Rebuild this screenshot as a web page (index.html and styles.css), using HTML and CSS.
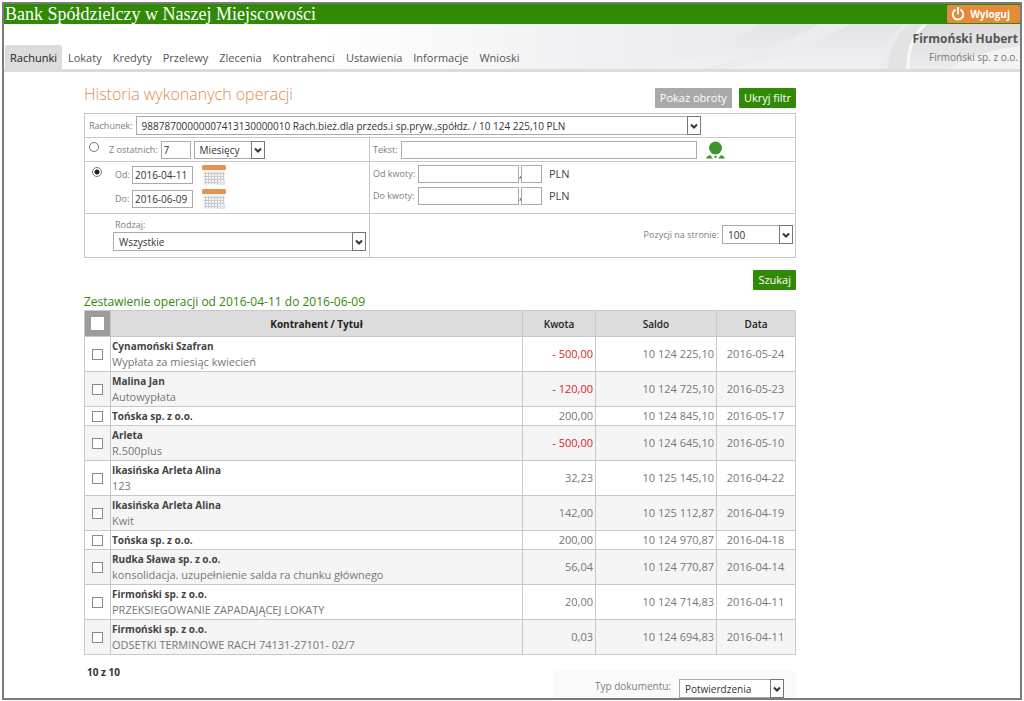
FILE: index.html
```html
<!DOCTYPE html>
<html lang="pl">
<head>
<meta charset="utf-8">
<meta name="viewport" content="width=device-width, initial-scale=1">
<title>Historia wykonanych operacji</title>
<link rel="stylesheet" href="styles.css">
</head>
<body>
<div class="frame">
  <header class="topbar">
    <span class="bank-name">Bank Spółdzielczy w Naszej Miejscowości</span>
    <button class="logout" type="button">
      <svg class="power" viewBox="0 0 16 16" aria-hidden="true"><path d="M4.6 3.4a6 6 0 1 0 6.8 0M8 1v6.5" fill="none" stroke="currentColor" stroke-width="2.2" stroke-linecap="round"/></svg>
      Wyloguj
    </button>
  </header>
  <div class="navbar">
    <svg class="swoosh" viewBox="0 0 700 46" preserveAspectRatio="none" aria-hidden="true">
      <defs>
        <linearGradient id="base" x1="0" x2="1" y1="0" y2="0"><stop offset="0" stop-color="#fff"/><stop offset=".35" stop-color="#f2f2f4"/><stop offset=".6" stop-color="#ebebed"/><stop offset="1" stop-color="#ececee"/></linearGradient>
        <linearGradient id="arc" x1="0" x2="0" y1="0" y2="1"><stop offset="0" stop-color="#dcdcde"/><stop offset="1" stop-color="#ececee"/></linearGradient>
        <linearGradient id="fade" x1="0" x2="0" y1="0" y2="1"><stop offset="0" stop-color="#e4e4e7"/><stop offset="1" stop-color="#f1f1f3"/></linearGradient>
      </defs>
      <rect width="700" height="46" fill="url(#base)"/>
      <path d="M330 46Q400 30 440 0H585Q565 16 560 46Z" fill="url(#fade)"/>
      <path d="M380 46Q450 30 500 0H530Q470 34 410 46Z" fill="#ececef"/>
      <path d="M568 46Q570 14 590 0H603Q588 16 587 46Z" fill="#e3e3e5"/>
      <path d="M588 46Q588 14 606 0H700V46Z" fill="url(#arc)"/>
      <path d="M588 46Q588 14 606 0" fill="none" stroke="#f8f8f8" stroke-width="3"/>
      <path d="M630 46Q650 30 700 22V46Z" fill="#f3f3f4"/>
    </svg>
    <nav class="tabs">
      <a class="tab active" href="#">Rachunki</a>
      <a class="tab" href="#">Lokaty</a>
      <a class="tab" href="#">Kredyty</a>
      <a class="tab" href="#">Przelewy</a>
      <a class="tab" href="#">Zlecenia</a>
      <a class="tab" href="#">Kontrahenci</a>
      <a class="tab" href="#">Ustawienia</a>
      <a class="tab" href="#">Informacje</a>
      <a class="tab" href="#">Wnioski</a>
    </nav>
    <div class="user">
      <strong class="user-name">Firmoński Hubert</strong>
      <span class="user-firm">Firmoński sp. z o.o.</span>
    </div>
  </div>

  <main class="content">
    <div class="title-row">
      <h1 class="title">Historia wykonanych operacji</h1>
      <button class="btn btn-gray" type="button">Pokaż obroty</button>
      <button class="btn" type="button">Ukryj filtr</button>
    </div>

    <form class="filter">
      <div class="cell wide account">
        <label for="account">Rachunek:</label>
        <span class="select account-select"><select id="account"><option>98878700000007413130000010 Rach.bież.dla przeds.i sp.pryw.,spółdz. / 10 124 225,10 PLN</option></select><span class="arrow"><svg viewBox="0 0 8 6"><path d="M1 1.5L4 4.5L7 1.5" /></svg></span></span>
      </div>

      <div class="cell last">
        <input class="radio" type="radio" name="range" id="range-last" aria-label="Z ostatnich">
        <label class="last-label" for="last-count">Z ostatnich:</label>
        <input class="field count" id="last-count" type="text" value="7">
        <span class="select unit"><select aria-label="Jednostka"><option>Miesięcy</option></select><span class="arrow"><svg viewBox="0 0 8 6"><path d="M1 1.5L4 4.5L7 1.5" /></svg></span></span>
      </div>
      <div class="cell right text-cell">
        <label for="text">Tekst:</label>
        <input class="field text" id="text" type="text">
        <svg class="people" viewBox="0 0 19 18" aria-hidden="true"><circle cx="9.500" cy="7" r="6.500"/><path d="M0 17.500Q1 14.500 4 14L7 17.500ZM12 17.500L15 14Q18 14.500 19 17.500ZM8 15.500L9.500 14.500L11 15.500L9.500 17.500Z"/></svg>
      </div>

      <div class="cell dates">
        <input class="radio" type="radio" name="range" id="range-dates" aria-label="Zakres dat" checked>
        <div class="date-rows">
          <div class="date-row">
            <label for="from">Od:</label>
            <input class="field date" id="from" type="text" value="2016-04-11">
            <svg class="calendar" viewBox="0 0 24 20" aria-hidden="true"><path d="M1 5H23V18L19 20H1Z" fill="#f3f3f5"/><path d="M2 8.500H22M2 11.500H22M2 14.500H22M2 17.500H18M3.500 7V19M6.500 7V19M9.500 7V19M12.500 7V19M15.500 7V19M18.500 7V16M21.500 7V14" stroke="#c9c9d0" fill="none"/><path d="M15 20L23 15V20Z" fill="#e2e2e6"/><rect y="0" width="24" height="5" rx="1.500" fill="#e9914f"/></svg>
          </div>
          <div class="date-row">
            <label for="to">Do:</label>
            <input class="field date" id="to" type="text" value="2016-06-09">
            <svg class="calendar" viewBox="0 0 24 20" aria-hidden="true"><path d="M1 5H23V18L19 20H1Z" fill="#f3f3f5"/><path d="M2 8.500H22M2 11.500H22M2 14.500H22M2 17.500H18M3.500 7V19M6.500 7V19M9.500 7V19M12.500 7V19M15.500 7V19M18.500 7V16M21.500 7V14" stroke="#c9c9d0" fill="none"/><path d="M15 20L23 15V20Z" fill="#e2e2e6"/><rect y="0" width="24" height="5" rx="1.500" fill="#e9914f"/></svg>
          </div>
        </div>
      </div>
      <div class="cell right amounts">
        <div class="amount-row">
          <label for="min">Od kwoty:</label>
          <input class="field amount" id="min" type="text"><span class="comma">,</span><input class="field cents" type="text" aria-label="Od kwoty, grosze">
          <span class="currency">PLN</span>
        </div>
        <div class="amount-row">
          <label for="max">Do kwoty:</label>
          <input class="field amount" id="max" type="text"><span class="comma">,</span><input class="field cents" type="text" aria-label="Do kwoty, grosze">
          <span class="currency">PLN</span>
        </div>
      </div>

      <div class="cell kind">
        <label for="kind">Rodzaj:</label>
        <span class="select"><select id="kind"><option>Wszystkie</option></select><span class="arrow"><svg viewBox="0 0 8 6"><path d="M1 1.5L4 4.5L7 1.5" /></svg></span></span>
      </div>
      <div class="cell right paging">
        <label for="per-page">Pozycji na stronie:</label>
        <span class="select per-page"><select id="per-page"><option>100</option></select><span class="arrow"><svg viewBox="0 0 8 6"><path d="M1 1.5L4 4.5L7 1.5" /></svg></span></span>
      </div>
    </form>

    <div class="actions"><button class="btn" type="button">Szukaj</button></div>

    <h2 class="subtitle">Zestawienie operacji od 2016-04-11 do 2016-06-09</h2>
    <table class="ops">
      <colgroup><col class="c-check"><col><col class="c-amount"><col class="c-balance"><col class="c-date"></colgroup>
      <thead>
        <tr><th class="check-all"><input class="check" type="checkbox" aria-label="Zaznacz wszystkie"></th><th class="main-head">Kontrahent / Tytuł</th><th>Kwota</th><th>Saldo</th><th>Data</th></tr>
      </thead>
      <tbody>
        <tr><td><input class="check" type="checkbox" aria-label="Zaznacz"></td><td><strong>Cynamoński Szafran</strong><span>Wypłata za miesiąc kwiecień</span></td><td class="neg">- 500,00</td><td>10 124 225,10</td><td>2016-05-24</td></tr>
        <tr><td><input class="check" type="checkbox" aria-label="Zaznacz"></td><td><strong>Malina Jan</strong><span>Autowypłata</span></td><td class="neg">- 120,00</td><td>10 124 725,10</td><td>2016-05-23</td></tr>
        <tr><td><input class="check" type="checkbox" aria-label="Zaznacz"></td><td><strong>Tońska sp. z o.o.</strong></td><td>200,00</td><td>10 124 845,10</td><td>2016-05-17</td></tr>
        <tr><td><input class="check" type="checkbox" aria-label="Zaznacz"></td><td><strong>Arleta</strong><span>R.500plus</span></td><td class="neg">- 500,00</td><td>10 124 645,10</td><td>2016-05-10</td></tr>
        <tr><td><input class="check" type="checkbox" aria-label="Zaznacz"></td><td><strong>Ikasińska Arleta Alina</strong><span>123</span></td><td>32,23</td><td>10 125 145,10</td><td>2016-04-22</td></tr>
        <tr><td><input class="check" type="checkbox" aria-label="Zaznacz"></td><td><strong>Ikasińska Arleta Alina</strong><span>Kwit</span></td><td>142,00</td><td>10 125 112,87</td><td>2016-04-19</td></tr>
        <tr><td><input class="check" type="checkbox" aria-label="Zaznacz"></td><td><strong>Tońska sp. z o.o.</strong></td><td>200,00</td><td>10 124 970,87</td><td>2016-04-18</td></tr>
        <tr><td><input class="check" type="checkbox" aria-label="Zaznacz"></td><td><strong>Rudka Sława sp. z o.o.</strong><span>konsolidacja. uzupełnienie salda ra chunku głównego</span></td><td>56,04</td><td>10 124 770,87</td><td>2016-04-14</td></tr>
        <tr><td><input class="check" type="checkbox" aria-label="Zaznacz"></td><td><strong>Firmoński sp. z o.o.</strong><span>PRZEKSIEGOWANIE ZAPADAJĄCEJ LOKATY</span></td><td>20,00</td><td>10 124 714,83</td><td>2016-04-11</td></tr>
        <tr><td><input class="check" type="checkbox" aria-label="Zaznacz"></td><td><strong>Firmoński sp. z o.o.</strong><span>ODSETKI TERMINOWE RACH 74131-27101- 02/7</span></td><td>0,03</td><td>10 124 694,83</td><td>2016-04-11</td></tr>
      </tbody>
    </table>

    <div class="footer">
      <strong class="total">10 z 10</strong>
      <div class="doc">
        <label for="doc-type">Typ dokumentu:</label>
        <span class="select doc-select"><select id="doc-type"><option>Potwierdzenia</option></select><span class="arrow"><svg viewBox="0 0 8 6"><path d="M1 1.5L4 4.5L7 1.5" /></svg></span></span>
      </div>
    </div>
  </main>
</div>
</body>
</html>
```
FILE: styles.css
```css
* { box-sizing: border-box; }

body {
  margin: 0;
  padding: 2px;
  background: #fff;
  color: #555;
  font-family: "Segoe UI", "Open Sans", "Noto Sans", sans-serif;
  font-size: 11px;
  line-height: 16px;
}

button, input, select { font: inherit; color: inherit; margin: 0; }

.frame { border: 2px solid #7b7b7b; }

.topbar {
  display: flex;
  align-items: center;
  justify-content: space-between;
  height: 20px;
  padding-left: 1px;
  background: #318a06;
}

.bank-name {
  color: #fff;
  font-family: Georgia, "Liberation Serif", serif;
  font-size: 18px;
  line-height: 20px;
}

.logout {
  display: flex;
  align-items: center;
  gap: 5px;
  height: 18px;
  padding: 0 10px 0 4px;
  border: 0;
  border-radius: 2px;
  background: #e48a3a;
  color: #fff;
  font-size: 10px;
  font-weight: 700;
}

.power { width: 14px; height: 14px; }

.navbar {
  position: relative;
  display: flex;
  align-items: flex-end;
  justify-content: space-between;
  height: 48px;
  border-bottom: 3px solid #dcdcdc;
}

.swoosh { position: absolute; top: 0; right: 0; width: 69%; height: 100%; }

.tabs { position: relative; display: flex; gap: 1px; padding-left: 1px; }

.tab {
  padding: 2px 5px 0;
  color: #555;
  font-size: 11px;
  line-height: 22px;
  text-decoration: none;
}

.tab.active { border-radius: 2px 2px 0 0; background: #dcdcdc; color: #222; }

.user {
  position: relative;
  align-self: flex-start;
  display: flex;
  flex-direction: column;
  align-items: flex-end;
  padding: 5px 2px 0;
}

.user-name { font-size: 12px; line-height: 20px; }
.user-firm { color: #777; font-size: 10px; }

.content { max-width: 792px; padding-left: 80px; }

.title-row { display: flex; align-items: flex-end; gap: 7px; padding: 9px 0 5px; }

.title {
  flex: 1;
  margin: 0;
  color: #e08c4e;
  font-size: 16px;
  font-weight: 300;
  line-height: 27px;
}

.btn {
  height: 20px;
  padding: 0 5px;
  border: 0;
  border-radius: 1px;
  background: #318a06;
  color: #fff;
  font-size: 11px;
  line-height: 20px;
}

.btn-gray { background: #a9a9a9; }

.filter {
  display: grid;
  grid-template-columns: 2fr 3fr;
  border: 1px solid #c8c8c8;
  border-top: 0;
}

.cell {
  display: flex;
  align-items: center;
  min-height: 24px;
  border-top: 1px solid #c8c8c8;
}

.cell.right { padding-left: 3px; border-left: 1px solid #c8c8c8; }
.wide { grid-column: 1 / -1; }

.filter label { color: #7d7d7d; font-size: 9px; }

.account { gap: 3px; padding-left: 4px; }
.account-select { width: 565px; }

.select { position: relative; display: flex; height: 19px; border: 1px solid #aaa; background: #fff; color: #333; }

.select select {
  width: 100%;
  padding: 0 16px 0 5px;
  border: 0;
  background: none;
  appearance: none;
  font-size: 10px;
}

.arrow {
  position: absolute;
  top: -1px;
  right: -1px;
  bottom: -1px;
  display: flex;
  align-items: center;
  justify-content: center;
  width: 14px;
  border: 1px solid #777;
  background: #fff;
  pointer-events: none;
}

.arrow svg { width: 8px; height: 6px; fill: none; stroke: #333; stroke-width: 2; }

.field {
  height: 18px;
  padding: 0 2px;
  border: 1px solid #aaa;
  background: #fff;
  color: #333;
  font-size: 10px;
}

.radio {
  flex: none;
  width: 10px;
  height: 10px;
  border: 1px solid #777;
  border-radius: 50%;
  background: #fff;
  appearance: none;
}

.radio:checked { background: radial-gradient(circle, #222 0 2px, #fff 3px); }

.last { gap: 3px; padding-left: 4px; }
.last .radio { align-self: flex-start; margin-top: 4px; }
.last-label { padding-left: 7px; }
.count { width: 30px; }
.unit { width: 71px; height: 18px; }

.text-cell { gap: 3px; }
.text { width: 296px; }
.people { width: 19px; height: 18px; margin-left: 6px; fill: #3f9430; }

.dates { align-items: flex-start; padding: 3px 0 0 7px; }
.dates .radio { margin-top: 2px; }
.date-rows { display: grid; gap: 4px; padding-left: 13px; }
.date-row { display: flex; align-items: center; gap: 2px; height: 20px; }
.date-row label { width: 15px; }
.date { width: 61px; }
.calendar { width: 24px; height: 20px; margin-left: 7px; }

.amounts { flex-direction: column; align-items: flex-start; gap: 4px; min-height: 52px; padding-top: 3px; }
.amount-row { display: flex; align-items: center; height: 18px; }
.amount-row label { width: 45px; white-space: nowrap; }
.amount { width: 101px; }
.comma { width: 2px; color: #444; }
.cents { width: 21px; }
.currency { padding-left: 7px; color: #444; }

.kind { flex-direction: column; align-items: stretch; padding: 4px 3px 6px 28px; }
.kind label { padding-left: 2px; line-height: 14px; }

.paging { justify-content: flex-end; gap: 3px; min-height: 44px; padding: 0 2px 2px 0; }
.per-page { width: 71px; }

.actions { display: flex; justify-content: flex-end; padding: 12px 0 4px; }

.subtitle { margin: 0; color: #318a06; font-size: 12px; font-weight: 400; line-height: 16px; }

.ops { width: 100%; border-collapse: collapse; table-layout: fixed; }
.c-check { width: 26px; }
.c-amount { width: 73px; }
.c-balance { width: 121px; }
.c-date { width: 79px; }

.ops th { height: 26px; padding: 0; border: 1px solid #c8c8c8; background: #dcdcdc; color: #222; font-size: 10px; font-weight: 600; }
.ops th.main-head { font-weight: 700; }
.ops th.check-all { background: #9c9c9c; }

.ops td { padding: 1px 2px 1px 1px; border: 1px solid #c8c8c8; color: #777; line-height: 16px; text-align: right; }
.ops tbody tr:nth-child(even) { background: #f5f5f5; }
.ops td:first-child, .ops td:last-child { text-align: center; }
.ops td:nth-child(2) { text-align: left; }
.ops td strong, .ops td span { display: block; }
.ops td strong { color: #444; font-size: 10px; }
.ops td.neg { color: #d8232a; }

.check { display: block; width: 11px; height: 11px; margin: 0 auto; border: 1px solid #8a8a8a; background: #fff; appearance: none; }
.check-all .check { width: 13px; height: 13px; border-color: #fff; }

.footer { display: flex; align-items: flex-start; justify-content: space-between; padding-top: 9px; }
.total { padding-left: 3px; color: #333; font-size: 10px; }

.doc { display: flex; align-items: flex-end; justify-content: flex-end; gap: 8px; width: 243px; height: 27px; margin-top: 7px; padding-right: 12px; background: #fafafa; color: #7d7d7d; font-size: 10px; }
.doc label { line-height: 24px; }
.doc-select { width: 105px; }
```
